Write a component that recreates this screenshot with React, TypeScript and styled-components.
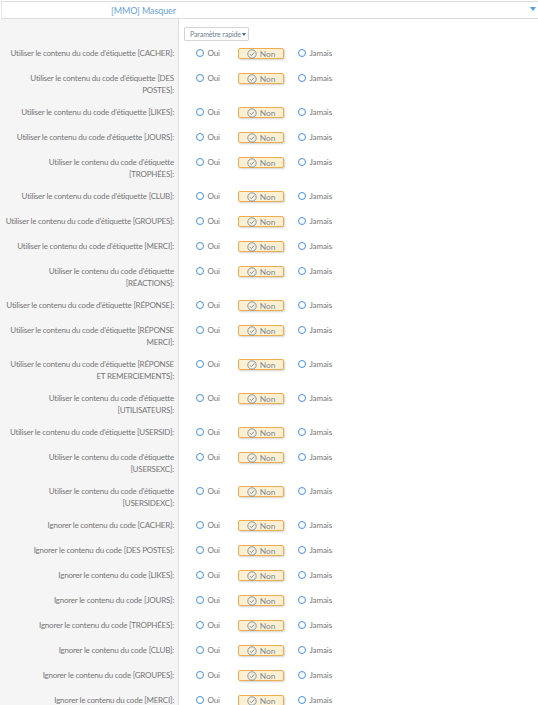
import React from "react";
import styled, { createGlobalStyle } from "styled-components";

const Global = createGlobalStyle`
  html, body { margin: 0; padding: 0; background: #fff; }
  body { width: 538px; height: 705px; overflow: hidden; font-family: Lato, "Open Sans", sans-serif; }
`;

const Page = styled.div`
  width: 538px;
  height: 705px;
  overflow: hidden;
  display: flex;
  flex-direction: column;
`;

const TopStrip = styled.div`
  height: 1px;
  flex: none;
`;

const Header = styled.div`
  flex: none;
  height: 16px;
  margin-left: 1px;
  display: flex;
  align-items: center;
  position: relative;
  border-top: 1px solid #dddddd;
  border-bottom: 1px solid #dddddd;
  border-left: 1px solid #e6e6e6;
  background: #fff;
`;

const HeaderTitle = styled.span`
  margin-left: 109px;
  font-size: 9px;
  letter-spacing: -0.1px;
  color: #6a9fd8;
  white-space: nowrap;
`;

const Caret = styled.span`
  position: absolute;
  right: 2px;
  top: 5px;
  width: 0;
  height: 0;
  border-left: 3.5px solid transparent;
  border-right: 3.5px solid transparent;
  border-top: 4px solid #4aa3ea;
`;

const Body = styled.div`
  flex: 1;
  display: grid;
  grid-template-columns: 178px 1fr;
  align-content: start;
  background: linear-gradient(to right, #f5f5f5 178px, #dedede 178px, #dedede 179px, #fff 179px);
`;

const QuickCell = styled.div`
  grid-column: 2;
  height: 28px;
  padding: 8px 0 0 6px;
  box-sizing: border-box;
`;

const QuickButton = styled.button`
  display: flex;
  align-items: center;
  gap: 1px;
  height: 12px;
  width: 58px;
  padding: 0 0 0 5px;
  border: 1px solid #d5d5d5;
  border-radius: 1px;
  background: #fff;
  color: #6f7f92;
  font: 7px Lato, sans-serif;
  letter-spacing: -0.1px;
  white-space: nowrap;
  box-sizing: content-box;
`;

const SmallCaret = styled.span`
  width: 0;
  height: 0;
  border-left: 2.5px solid transparent;
  border-right: 2.5px solid transparent;
  border-top: 3px solid #4c6a8c;
`;

const Label = styled.div<{ $tall: boolean }>`
  height: ${(p) => (p.$tall ? 34 : 25)}px;
  box-sizing: border-box;
  padding: 0 4px 0 5px;
  text-align: right;
  font-size: 8px;
  letter-spacing: -0.22px;
  line-height: 12px;
  color: #757575;
`;

const Options = styled.div`
  display: flex;
  align-items: flex-start;
  padding: 0 0 0 18px;
`;

const Option = styled.div<{ $width: number }>`
  display: flex;
  align-items: center;
  gap: 3.5px;
  width: ${(p) => p.$width}px;
  height: 12px;
  font-size: 8px;
  letter-spacing: -0.1px;
  color: #757575;
  flex: none;
`;

const Radio = styled.span`
  width: 6px;
  height: 6px;
  border: 1px solid #4a90e2;
  border-radius: 50%;
  flex: none;
  background: #fff;
`;

const Selected = styled.div`
  display: flex;
  align-items: center;
  justify-content: center;
  gap: 3px;
  width: 44px;
  height: 9px;
  margin: 1px 14px 0 0;
  border: 1px solid #f0ad4e;
  border-radius: 2px;
  background: #fdf0d2;
  box-shadow: 1px 1px 2px rgba(0, 0, 0, 0.18);
  color: #7a8a9c;
  font-size: 8.4px;
  flex: none;
`;

const Check = () => (
  <svg width="10" height="10" viewBox="0 0 10 10" fill="none" stroke="#6c8fb8" strokeWidth="0.9">
    <circle cx="5" cy="5" r="4.2" />
    <path d="M3 5.2 L4.5 6.6 L7.2 3.6" />
  </svg>
);

const rows: [string, boolean][] = [
  ["Utiliser le contenu du code d'étiquette [CACHER]:", false],
  ["Utiliser le contenu du code d'étiquette [DES POSTES]:", true],
  ["Utiliser le contenu du code d'étiquette [LIKES]:", false],
  ["Utiliser le contenu du code d'étiquette [JOURS]:", false],
  ["Utiliser le contenu du code d'étiquette [TROPHÉES]:", true],
  ["Utiliser le contenu du code d'étiquette [CLUB]:", false],
  ["Utiliser le contenu du code d'étiquette [GROUPES]:", false],
  ["Utiliser le contenu du code d'étiquette [MERCI]:", false],
  ["Utiliser le contenu du code d'étiquette [RÉACTIONS]:", true],
  ["Utiliser le contenu du code d'étiquette [RÉPONSE]:", false],
  ["Utiliser le contenu du code d'étiquette [RÉPONSE MERCI]:", true],
  ["Utiliser le contenu du code d'étiquette [RÉPONSE ET REMERCIEMENTS]:", true],
  ["Utiliser le contenu du code d'étiquette [UTILISATEURS]:", true],
  ["Utiliser le contenu du code d'étiquette [USERSID]:", false],
  ["Utiliser le contenu du code d'étiquette [USERSEXC]:", true],
  ["Utiliser le contenu du code d'étiquette [USERSIDEXC]:", true],
  ["Ignorer le contenu du code [CACHER]:", false],
  ["Ignorer le contenu du code [DES POSTES]:", false],
  ["Ignorer le contenu du code [LIKES]:", false],
  ["Ignorer le contenu du code [JOURS]:", false],
  ["Ignorer le contenu du code [TROPHÉES]:", false],
  ["Ignorer le contenu du code [CLUB]:", false],
  ["Ignorer le contenu du code [GROUPES]:", false],
  ["Ignorer le contenu du code [MERCI]:", false],
];

export default function App() {
  return (
    <Page>
      <Global />
      <TopStrip />
      <Header>
        <HeaderTitle>[MMO] Masquer</HeaderTitle>
        <Caret />
      </Header>
      <Body>
        <QuickCell>
          <QuickButton>
            Paramètre rapide
            <SmallCaret />
          </QuickButton>
        </QuickCell>
        {rows.map(([text, tall]) => (
          <React.Fragment key={text}>
            <Label $tall={tall}>{text}</Label>
            <Options>
              <Option $width={42}>
                <Radio />
                Oui
              </Option>
              <Selected>
                <Check />
                Non
              </Selected>
              <Option $width={50}>
                <Radio />
                Jamais
              </Option>
            </Options>
          </React.Fragment>
        ))}
      </Body>
    </Page>
  );
}
